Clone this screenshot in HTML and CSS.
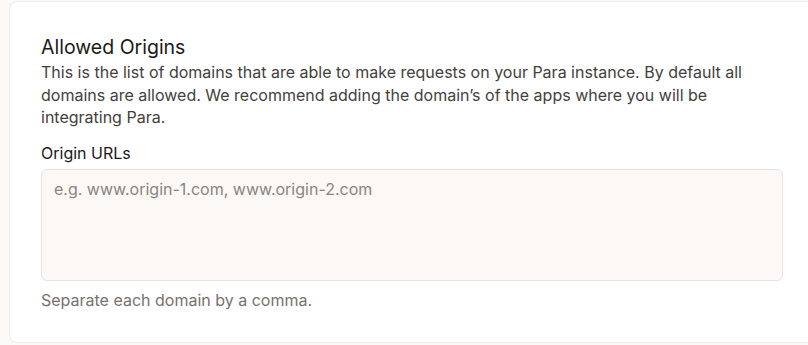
FILE: index.html
```html
<!DOCTYPE html>
<html lang="en">
<head>
    <meta charset="UTF-8">
    <meta name="viewport" content="width=device-width, initial-scale=1.0">
    <title>Allowed Origins</title>
    <link rel="stylesheet" href="styles.css">
</head>
<body>
    <div class="card">
        <h2>Allowed Origins</h2>
        <p class="desc">This is the list of domains that are able to make requests on your Para instance. By default all domains are allowed. We recommend adding the domain’s of the apps where you will be integrating Para.</p>
        <label class="field-label" for="origins">Origin URLs</label>
        <textarea id="origins" class="origins" placeholder="e.g. www.origin-1.com, www.origin-2.com"></textarea>
        <p class="hint">Separate each domain by a comma.</p>
    </div>
</body>
</html>
```

FILE: styles.css
```css
body {
    margin: 0;
    font-family: Inter, "Noto Sans", sans-serif;
    background-color: #fcf8f5;
    padding: 1px 0 0 9px;
    overflow: hidden;
}

.card {
    background: white;
    border: 1px solid #f0ece8;
    border-right: none;
    border-radius: 8px 0 0 8px;
    padding: 31px 25px 30px 31px;
}

h2 {
    margin: 0;
    font-size: 19.5px;
    font-weight: 400;
    line-height: 28px;
    color: #1c1917;
}

.desc {
    margin: 0;
    font-size: 16px;
    line-height: 22.5px;
    color: #44403c;
}

.field-label {
    display: block;
    margin-top: 12px;
    font-size: 16px;
    font-weight: 400;
    line-height: 24px;
    color: #1c1917;
}

.origins {
    display: block;
    box-sizing: border-box;
    width: 742px;
    height: 112px;
    margin-top: 4px;
    padding: 7px 12px;
    border: 1px solid #e7e3df;
    border-radius: 6px;
    background: #fcf8f5;
    font-family: inherit;
    font-size: 16px;
    line-height: 24px;
    resize: none;
    outline: none;
}

.origins::placeholder {
    color: #8a8480;
}

.hint {
    margin: 7px 0 0;
    font-size: 16px;
    line-height: 24px;
    color: #78716c;
}
```
